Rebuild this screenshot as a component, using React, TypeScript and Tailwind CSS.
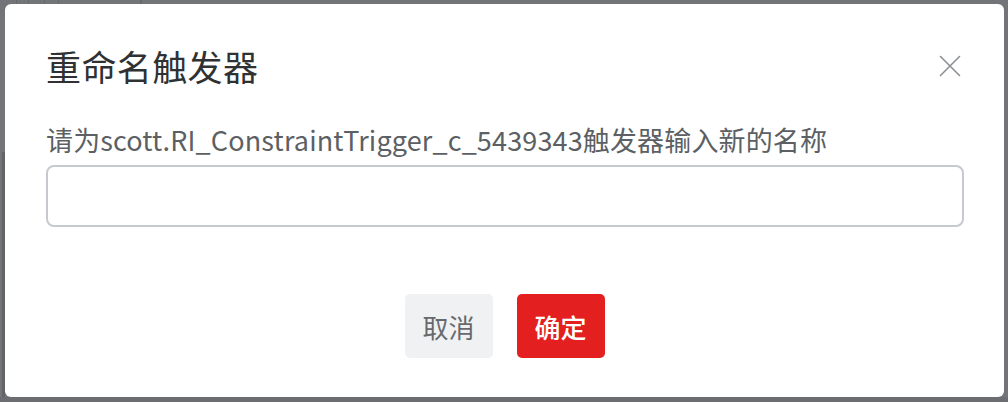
import React from 'react';

const font = { fontFamily: '"Noto Sans CJK SC", "Noto Sans", sans-serif' };

function CloseIcon() {
  return (
    <svg width="24" height="24" viewBox="0 0 24 24" className="mr-[2px] shrink-0" fill="none">
      <path d="M2.5 2.5L21.5 21.5M21.5 2.5L2.5 21.5" stroke="#8c8f95" strokeWidth="1.6" strokeLinecap="round" />
    </svg>
  );
}

export default function App() {
  return (
    <div className="relative w-[1008px] h-[402px] overflow-hidden bg-[#727478]" style={font}>
      {/* page behind the mask */}
      <div className="absolute inset-0 flex">
        <div className="w-[17px] border-r border-[#66686c]" />
        <div className="w-[12px] border-r border-[#66686c]" />
        <div className="w-[16px] border-r border-[#66686c]" />
        <div className="w-[14px] border-r border-[#66686c]" />
        <div className="w-[83px] border-r-2 border-[#66686c]" />
      </div>
      <div className="absolute left-[2px] top-[152px] w-[3px] h-[250px] bg-[#626468]" />
      <div className="absolute left-0 right-0 bottom-0 h-[5px] bg-[#6b6d71]" />

      <div className="absolute left-[5px] top-[4px] w-[999px] h-[393px] bg-white rounded-[6px] pl-[41px] pr-[40px] pt-[38px] flex flex-col">
        <div className="flex items-center justify-between">
          <h2 className="text-[35px] leading-[48px] tracking-[0.4px] text-[#2f3133] font-normal">重命名触发器</h2>
          <CloseIcon />
        </div>
        <p className="mt-[32px] text-[27px] leading-[36px] tracking-[0.15px] text-[#5c5f63] whitespace-nowrap">
          请为scott.RI_ConstraintTrigger_c_5439343触发器输入新的名称
        </p>
        <input
          type="text"
          className="mt-[7px] h-[62px] w-full rounded-[8px] border-2 border-[#c6c9d0] bg-white px-4 text-[24px] outline-none"
        />
        <div className="mt-[67px] flex justify-center gap-[24px] pr-[1px]">
          <button className="w-[88px] h-[64px] rounded-[5px] bg-[#f0f1f3] text-[26px] text-[#67696d]">取消</button>
          <button className="w-[88px] h-[64px] rounded-[5px] bg-[#e31f1f] text-[26px] font-medium text-white">确定</button>
        </div>
      </div>
    </div>
  );
}
